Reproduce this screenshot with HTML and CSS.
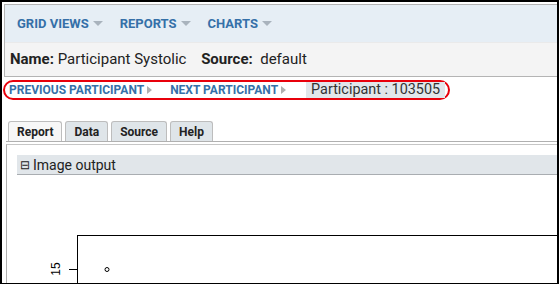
FILE: index.html
```html
<!DOCTYPE html>
<html lang="en">
<head>
    <meta charset="UTF-8">
    <meta name="viewport" content="width=device-width, initial-scale=1.0">
    <title>Participant Systolic</title>
    <link rel="stylesheet" href="styles.css">
</head>
<body>
<div class="frame">

    <!-- Report header -->
    <div class="panel">
        <div class="menubar">
            <span class="menu">GRID VIEWS<span class="caret"></span></span>
            <span class="menu">REPORTS<span class="caret"></span></span>
            <span class="menu">CHARTS<span class="caret"></span></span>
        </div>
        <div class="titlebar">
            <b>Name:</b> Participant Systolic <b class="label-gap">Source:</b>&nbsp; default
        </div>
    </div>

    <!-- Participant pager -->
    <div class="pager">
        <a class="pager-link">PREVIOUS PARTICIPANT</a><span class="arrow"></span>
        <a class="pager-link next">NEXT PARTICIPANT</a><span class="arrow"></span>
        <span class="current">Participant : 103505</span>
    </div>

    <!-- Tabs -->
    <div class="tabs">
        <span class="tab active">Report</span>
        <span class="tab">Data</span>
        <span class="tab">Source</span>
        <span class="tab">Help</span>
    </div>

    <div class="tab-body">
        <div class="section-head"><span class="collapse">&#x229F;</span>Image output</div>
        <svg class="plot" width="552" height="112" viewBox="0 0 552 112">
            <rect x="70.5" y="60.5" width="500" height="80" fill="none" stroke="#000" stroke-width="1"/>
            <line x1="62" y1="94.5" x2="70" y2="94.5" stroke="#000" stroke-width="1"/>
            <text x="0" y="0" transform="translate(53 94) rotate(-90)" text-anchor="middle" font-family="Liberation Sans, Arial, sans-serif" font-size="12">15</text>
            <circle cx="100" cy="94.5" r="2" fill="none" stroke="#000" stroke-width="1"/>
        </svg>
    </div>

</div>
</body>
</html>
```

FILE: styles.css
```css
/* Page frame */
html, body {
    margin: 0;
    font-family: Roboto, Arial, sans-serif;
    background-color: #fff;
}

.frame {
    width: 559px;
    height: 284px;
    box-sizing: border-box;
    border: 2px solid #000;
    border-bottom-width: 1px;
    overflow: hidden;
}

/* Header panel */
.panel {
    margin: 2px 0 0 2px;
    border-top: 1px solid #b4b4b4;
    border-left: 1px solid #b4b4b4;
    border-bottom: 1px solid #b4b4b4;
}

.menubar {
    height: 37px;
    background-color: #e6eef5;
    display: flex;
    align-items: center;
    gap: 17px;
    padding-left: 12px;
}

.menu {
    font-size: 13px;
    font-weight: bold;
    color: #3570a8;
    display: flex;
    align-items: center;
}

.caret {
    width: 0;
    height: 0;
    margin-left: 4px;
    border-left: 5px solid transparent;
    border-right: 5px solid transparent;
    border-top: 5px solid #a9b3bd;
}

.titlebar {
    height: 33px;
    line-height: 33px;
    background-color: #f4f4f4;
    border-top: 1px solid #eaeaea;
    padding-left: 5px;
    font-size: 15px;
    color: #222;
    white-space: nowrap;
}

.label-gap {
    margin-left: 11px;
}

/* Pager */
.pager {
    display: inline-flex;
    align-items: center;
    height: 16px;
    margin: 3px 0 0 1px;
    padding: 0 3px 0 4px;
    border: 2px solid #e8000b;
    border-radius: 10px;
}

.pager-link {
    font-size: 12px;
    font-weight: bold;
    color: #3570a8;
}

.pager-link.next {
    margin-left: 18px;
}

.arrow {
    width: 0;
    height: 0;
    margin-left: 3px;
    border-top: 4px solid transparent;
    border-bottom: 4px solid transparent;
    border-left: 5px solid #b0b0b0;
}

.current {
    margin-left: 20px;
    padding: 0 5px;
    height: 16px;
    line-height: 16px;
    background-color: #e1e6ea;
    font-size: 14.4px;
    color: #333;
}

/* Tabs */
.tabs {
    display: flex;
    gap: 3px;
    margin: 21px 0 0 4px;
    padding-left: 2px;
    border-bottom: 1px solid #b0b0b0;
    height: 20px;
}

.tab {
    height: 20px;
    box-sizing: border-box;
    padding: 0 8px;
    border: 1px solid #bdbdbd;
    border-bottom: none;
    border-radius: 3px 3px 0 0;
    background-color: #dfe5e9;
    font-size: 12px;
    font-weight: bold;
    color: #222;
    display: flex;
    align-items: center;
}

.tab.active {
    background-color: #f7f7f7;
}

.tab-body {
    margin: 2px 0 0 4px;
    border-top: 1px solid #c6c6c6;
    border-left: 1px solid #b0b0b0;
    padding-top: 10px;
}

.section-head {
    margin-left: 10px;
    height: 19px;
    background-color: #e1e6ea;
    border-bottom: 1px solid #a9adb1;
    font-size: 14px;
    color: #222;
    display: flex;
    align-items: center;
}

.collapse {
    font-size: 12px;
    margin: 0 3px 0 3px;
}

.plot {
    display: block;
}
```
